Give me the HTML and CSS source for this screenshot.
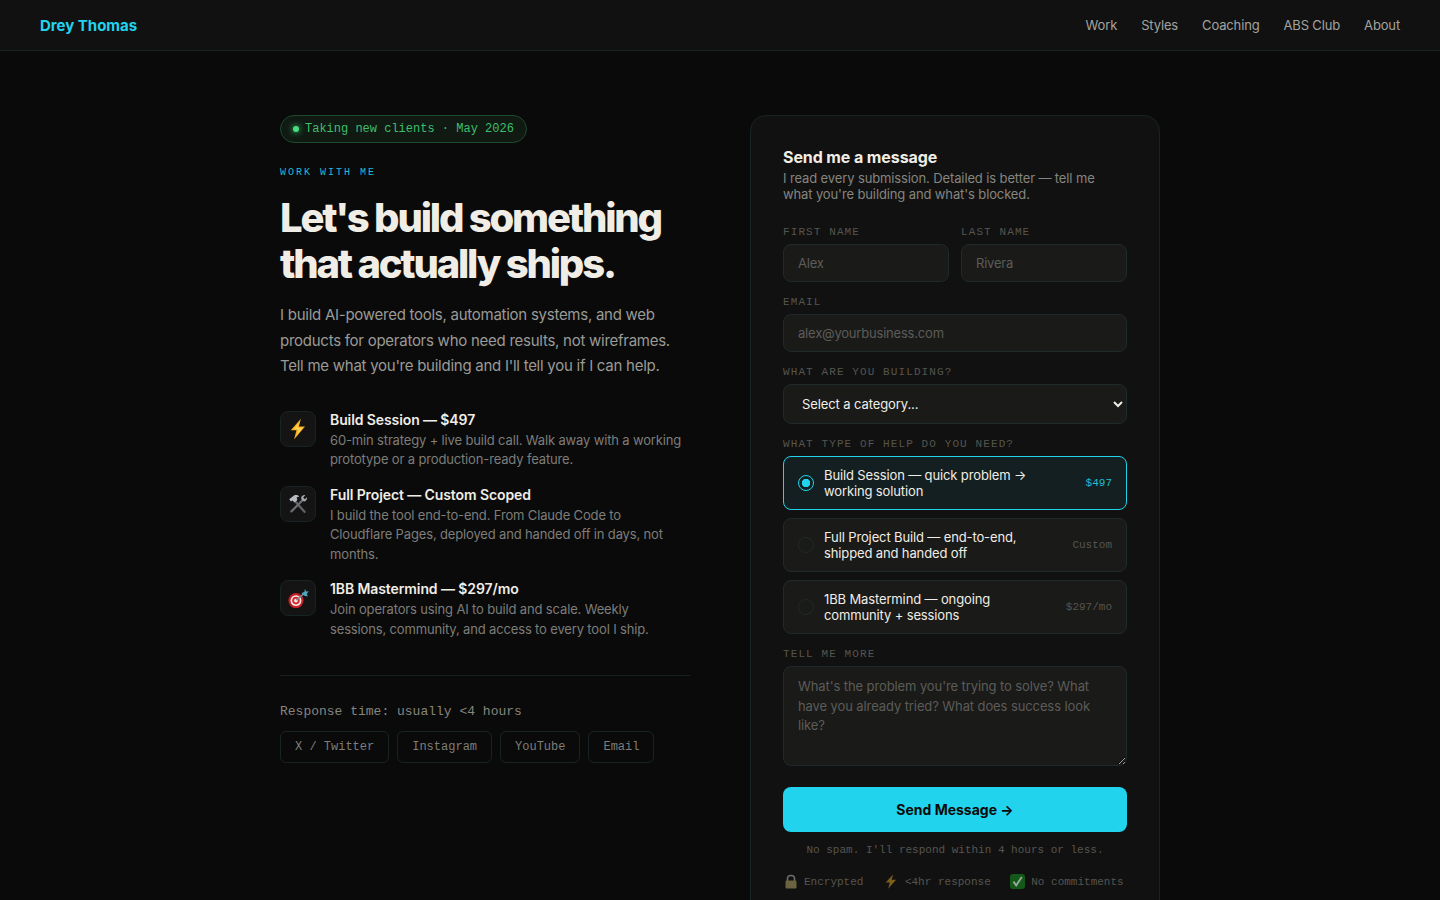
FILE: index.html
```html
<!DOCTYPE html>
<html lang="en">
<head>
    <meta charset="UTF-8">
    <meta name="viewport" content="width=device-width, initial-scale=1.0">
    <title>Work With Me - Drey Thomas</title>
    <link rel="stylesheet" href="styles.css">
</head>
<body>
    <nav class="nav">
        <a class="logo" href="#">Drey Thomas</a>
        <div class="nav-links">
            <a href="#">Work</a>
            <a href="#">Styles</a>
            <a href="#">Coaching</a>
            <a href="#">ABS Club</a>
            <a href="#">About</a>
        </div>
    </nav>

    <main class="page">
        <section class="intro">
            <div class="badge"><span class="dot"></span>Taking new clients · May 2026</div>
            <div class="eyebrow">WORK WITH ME</div>
            <h1>Let's build something that actually ships.</h1>
            <p class="lead">I build AI-powered tools, automation systems, and web products for operators who need results, not wireframes. Tell me what you're building and I'll tell you if I can help.</p>

            <div class="offers">
                <div class="offer">
                    <div class="offer-icon">
                        <svg width="22" height="22" viewBox="0 0 20 20">
                            <path d="M12.6 0.6 L3.4 11.2 L8.6 11.2 L6.4 19.6 L16.4 7.8 L10.8 7.8 Z" fill="#f5a821"/>
                            <path d="M11.6 3.4 L5.6 10.4 L10 10.4 L8.4 16.4 L14.6 8.6 L9.6 8.6 Z" fill="#fcd34d"/>
                        </svg>
                    </div>
                    <div>
                        <h3>Build Session — $497</h3>
                        <p>60-min strategy + live build call. Walk away with a working prototype or a production-ready feature.</p>
                    </div>
                </div>
                <div class="offer">
                    <div class="offer-icon">
                        <svg width="20" height="20" viewBox="0 0 20 20">
                            <path d="M6.5 6.5 L16.5 17.8" stroke="#5f5f66" stroke-width="2.4" stroke-linecap="round"/>
                            <path d="M1.2 5.2 L6 1.4 C8 0.8 10 1.2 11.2 2.4 L8.6 3.4 L9.4 6 L6.6 8.4 L4.6 6.6 L3 7.6 Z" fill="#b8bac0"/>
                            <path d="M15 5.8 L3.4 17.4" stroke="#6d6d74" stroke-width="2.2" stroke-linecap="round"/>
                            <path d="M13.2 3.6 C13.6 1.8 15.4 0.8 17.2 1.2 L15.2 3.6 L16.8 5.2 L19 3.2 C19.4 5 18.4 6.8 16.6 7.4 C15 7.8 12.8 5.6 13.2 3.6 Z" fill="#a6a8ae"/>
                        </svg>
                    </div>
                    <div>
                        <h3>Full Project — Custom Scoped</h3>
                        <p>I build the tool end-to-end. From Claude Code to Cloudflare Pages, deployed and handed off in days, not months.</p>
                    </div>
                </div>
                <div class="offer">
                    <div class="offer-icon">
                        <svg width="21" height="21" viewBox="0 0 20 20">
                            <circle cx="7.6" cy="12" r="7.2" fill="#c81e28"/>
                            <circle cx="7.6" cy="12" r="5.2" fill="#f3ece6"/>
                            <circle cx="7.6" cy="12" r="3.6" fill="#d42a32"/>
                            <circle cx="7.6" cy="12" r="1.8" fill="#f3ece6"/>
                            <path d="M8 11.6 L15 5.6" stroke="#7c8a90" stroke-width="1.4"/>
                            <path d="M12.8 4.8 L15.6 3.8 L16.2 0.8 L17.2 3.4 L19.8 3.2 L18 5.4 L18.8 8 L15.6 7.4 Z" fill="#4fa8c0"/>
                        </svg>
                    </div>
                    <div>
                        <h3>1BB Mastermind — $297/mo</h3>
                        <p>Join operators using AI to build and scale. Weekly sessions, community, and access to every tool I ship.</p>
                    </div>
                </div>
            </div>

            <div class="contact">
                <div class="response">Response time: usually &lt;4 hours</div>
                <div class="socials">
                    <a href="#">X / Twitter</a>
                    <a href="#">Instagram</a>
                    <a href="#">YouTube</a>
                    <a href="#">Email</a>
                </div>
            </div>
        </section>

        <form class="card">
            <h2>Send me a message</h2>
            <p class="card-sub">I read every submission. Detailed is better — tell me what you're building and what's blocked.</p>

            <div class="row">
                <div class="field">
                    <label for="first">FIRST NAME</label>
                    <input id="first" type="text" placeholder="Alex">
                </div>
                <div class="field">
                    <label for="last">LAST NAME</label>
                    <input id="last" type="text" placeholder="Rivera">
                </div>
            </div>
            <div class="field">
                <label for="email">EMAIL</label>
                <input id="email" type="email" placeholder="alex@yourbusiness.com">
            </div>
            <div class="field">
                <label for="category">WHAT ARE YOU BUILDING?</label>
                <select id="category">
                    <option>Select a category...</option>
                </select>
            </div>
            <div class="field">
                <label>WHAT TYPE OF HELP DO YOU NEED?</label>
                <div class="options">
                    <div class="option selected">
                        <span class="radio"></span>
                        <span class="option-text">Build Session — quick problem → working solution</span>
                        <span class="price">$497</span>
                    </div>
                    <div class="option">
                        <span class="radio"></span>
                        <span class="option-text">Full Project Build — end-to-end, shipped and handed off</span>
                        <span class="price">Custom</span>
                    </div>
                    <div class="option">
                        <span class="radio"></span>
                        <span class="option-text">1BB Mastermind — ongoing community + sessions</span>
                        <span class="price">$297/mo</span>
                    </div>
                </div>
            </div>
            <div class="field">
                <label for="more">TELL ME MORE</label>
                <textarea id="more" placeholder="What's the problem you're trying to solve? What have you already tried? What does success look like?"></textarea>
            </div>
            <button class="submit" type="button">Send Message →</button>
            <p class="fine">No spam. I'll respond within 4 hours or less.</p>
            <div class="trust">
                <span>
                    <svg width="13" height="15" viewBox="0 0 13 15">
                        <path d="M2.5 7 V4.5 C2.5 0.4 9.5 0.4 9.5 4.5 V7" fill="none" stroke="#6e6e6a" stroke-width="1.6"/>
                        <rect x="0.5" y="6.5" width="11" height="8" rx="1.2" fill="#6b6240"/>
                    </svg>
                    Encrypted
                </span>
                <span>
                    <svg width="16" height="15" viewBox="0 0 20 20" preserveAspectRatio="none">
                        <path d="M12.6 0.6 L3.4 11.2 L8.6 11.2 L6.4 19.6 L16.4 7.8 L10.8 7.8 Z" fill="#7d5f1c"/>
                    </svg>
                    &lt;4hr response
                </span>
                <span>
                    <svg width="15" height="15" viewBox="0 0 15 15">
                        <rect width="15" height="15" rx="3" fill="#14591a"/>
                        <path d="M3.4 7.6 L6.2 11.4 L11.8 3" fill="none" stroke="#9aa896" stroke-width="1.8"/>
                    </svg>
                    No commitments
                </span>
            </div>
        </form>
    </main>
</body>
</html>
```

FILE: styles.css
```css
* {
    box-sizing: border-box;
}
body {
    margin: 0;
    background: #0a0a0a;
    color: #f0ede6;
    font-family: Inter, 'Noto Sans', sans-serif;
}
a {
    text-decoration: none;
    color: inherit;
}
.nav {
    height: 51px;
    padding: 0 40px;
    display: flex;
    align-items: center;
    justify-content: space-between;
    background: #111111;
    border-bottom: 1px solid #182326;
}
.logo {
    color: #22d3ee;
    font-size: 15px;
    font-weight: 700;
}
.nav-links {
    display: flex;
    gap: 24px;
    font-size: 13px;
    letter-spacing: -0.15px;
    color: #a3a3a0;
}
.page {
    width: 880px;
    margin: 0 auto;
    padding-top: 64px;
    display: grid;
    grid-template-columns: 410px 410px;
    gap: 60px;
    align-items: start;
}
.badge {
    display: inline-flex;
    align-items: center;
    gap: 6px;
    height: 28px;
    padding: 0 12px;
    border: 1px solid #1c4a2c;
    border-radius: 14px;
    background: #101a13;
    color: #3fbf6c;
    font-family: 'Liberation Mono', monospace;
    font-size: 12px;
}
.dot {
    width: 6px;
    height: 6px;
    border-radius: 50%;
    background: #4ade80;
    box-shadow: 0 0 6px #4ade80;
}
.eyebrow {
    margin-top: 24px;
    color: #20bcd4;
    font-family: 'Liberation Mono', monospace;
    font-size: 10px;
    letter-spacing: 2px;
}
h1 {
    margin: 17px 0 0;
    font-size: 40px;
    line-height: 46px;
    font-weight: 800;
    letter-spacing: -2.2px;
}
.lead {
    margin: 15px 0 0;
    font-size: 15px;
    line-height: 25.5px;
    letter-spacing: -0.26px;
    color: #9a9a96;
}
.offers {
    margin-top: 32px;
    padding-bottom: 36px;
    border-bottom: 1px solid #182023;
    display: flex;
    flex-direction: column;
    gap: 16px;
}
.offer {
    display: flex;
    gap: 14px;
}
.offer-icon {
    width: 36px;
    height: 36px;
    flex: none;
    display: flex;
    align-items: center;
    justify-content: center;
    border: 1px solid #182326;
    border-radius: 8px;
    background: #141414;
}
.offer h3 {
    margin: 0 0 2px;
    font-size: 14px;
    line-height: 18px;
    font-weight: 600;
    letter-spacing: -0.1px;
}
.offer p {
    margin: 0;
    max-width: 355px;
    font-size: 13px;
    line-height: 19.5px;
    letter-spacing: -0.15px;
    color: #7d7d79;
}
.contact {
    margin-top: 28px;
}
.response {
    font-family: 'Liberation Mono', monospace;
    font-size: 13px;
    line-height: 15px;
    color: #85857f;
}
.socials {
    margin-top: 12px;
    display: flex;
    gap: 8px;
}
.socials a {
    height: 32px;
    padding: 0 14px;
    display: flex;
    align-items: center;
    border: 1px solid #182326;
    border-radius: 6px;
    font-family: 'Liberation Mono', monospace;
    font-size: 12px;
    color: #7d7d79;
}
.card {
    padding: 32px;
    border: 1px solid #182326;
    border-radius: 16px;
    background: #111111;
}
.card h2 {
    margin: 0;
    font-size: 16px;
    line-height: 18px;
    font-weight: 700;
    letter-spacing: -0.1px;
}
.card-sub {
    margin: 4px 0 0;
    font-size: 13px;
    line-height: 16px;
    letter-spacing: -0.12px;
    color: #85857f;
}
.row {
    display: grid;
    grid-template-columns: 1fr 1fr;
    gap: 12px;
}
.field {
    margin-top: 13px;
}
.row .field {
    margin-top: 23px;
}
.field label {
    display: block;
    margin-bottom: 4px;
    font-family: 'Liberation Mono', monospace;
    font-size: 11px;
    line-height: 15px;
    letter-spacing: 1.1px;
    color: #55554f;
}
.field input,
.field textarea {
    width: 100%;
    height: 38px;
    padding: 0 14px;
    border: 1px solid #1f2a2b;
    border-radius: 8px;
    background: #1a1a18;
    color: #f0ede6;
    font-family: Inter, sans-serif;
    font-size: 13px;
    letter-spacing: -0.2px;
}
.field input::placeholder,
.field textarea::placeholder {
    color: #5c5c58;
}
.field textarea {
    display: block;
    height: 100px;
    padding: 10px 14px;
    line-height: 19.5px;
    letter-spacing: -0.1px;
    resize: vertical;
}
.field select {
    width: 100%;
    height: 40px;
    padding: 0 14px;
    border: 1px solid #1f2a2b;
    border-radius: 8px;
    background: #1a1a18;
    color: #f0ede6;
    font-family: Inter, sans-serif;
    font-size: 13px;
    letter-spacing: -0.1px;
}
.options {
    display: flex;
    flex-direction: column;
    gap: 8px;
}
.option {
    height: 54px;
    padding: 0 14px;
    display: flex;
    align-items: center;
    gap: 10px;
    border: 1px solid #1f2a2b;
    border-radius: 8px;
    background: #1a1a18;
}
.option.selected {
    border-color: #22d3ee;
    background: #141f22;
}
.radio {
    width: 16px;
    height: 16px;
    flex: none;
    border: 1.5px solid #1f2a2b;
    border-radius: 50%;
}
.selected .radio {
    border-color: #22d3ee;
    background: radial-gradient(circle, #22d3ee 0 4px, transparent 4.5px);
}
.option-text {
    flex: 1;
    font-size: 13px;
    line-height: 16px;
    letter-spacing: -0.13px;
}
.price {
    font-family: 'Liberation Mono', monospace;
    font-size: 11px;
    color: #55554f;
}
.selected .price {
    color: #20bcd4;
}
.submit {
    width: 100%;
    height: 45px;
    margin-top: 21px;
    border: none;
    border-radius: 8px;
    background: #22d3ee;
    color: #0a0a0a;
    font-family: Inter, sans-serif;
    font-size: 14px;
    font-weight: 700;
}
.fine {
    margin: 12px 0 0;
    text-align: center;
    font-family: 'Liberation Mono', monospace;
    font-size: 11px;
    line-height: 13px;
    color: #55554f;
}
.trust {
    margin-top: 17px;
    padding-left: 2px;
    display: flex;
    gap: 19.5px;
    font-family: 'Liberation Mono', monospace;
    font-size: 11px;
    color: #55554f;
}
.trust span {
    display: flex;
    align-items: center;
    gap: 6px;
}
```
